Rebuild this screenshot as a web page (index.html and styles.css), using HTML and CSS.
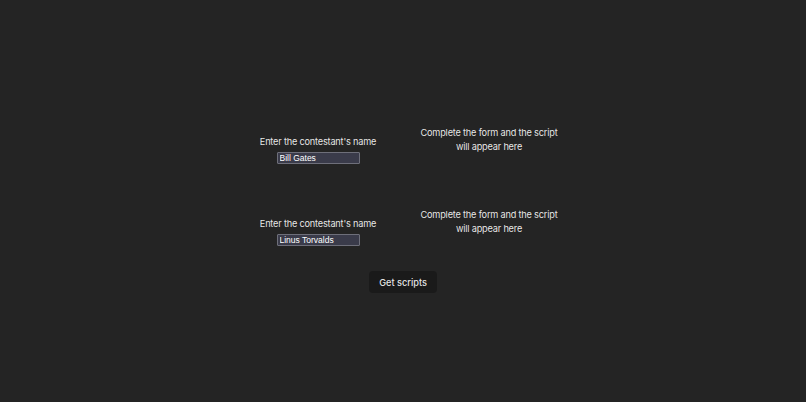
FILE: index.html
```html
<!DOCTYPE html>
<html lang="en">
<head>
<meta charset="utf-8">
<title>Contestants</title>
<link rel="stylesheet" href="styles.css">
</head>
<body>
<main class="app">
  <div class="form-list">
    <div class="row">
      <div class="entry">
        <label class="entry-label" for="c1">Enter the contestant's name</label>
        <input class="entry-input" id="c1" type="text" value="Bill Gates">
      </div>
      <p class="script">Complete the form and the script<br>will appear here</p>
    </div>
    <div class="row">
      <div class="entry">
        <label class="entry-label" for="c2">Enter the contestant's name</label>
        <input class="entry-input" id="c2" type="text" value="Linus Torvalds">
      </div>
      <p class="script">Complete the form and the script<br>will appear here</p>
    </div>
  </div>
  <button class="submit" type="button">Get scripts</button>
</main>
</body>
</html>
```
FILE: styles.css
```css
html, body {
  margin: 0;
  padding: 0;
  background: #242424;
  color: rgba(255, 255, 255, 0.9);
  font-family: Inter, "Noto Sans", sans-serif;
  font-size: 9.2px;
  letter-spacing: -0.2px;
  line-height: 14px;
}
.app {
  padding-top: 126px;
  display: flex;
  flex-direction: column;
  align-items: center;
}
.form-list {
  display: flex;
  flex-direction: column;
  gap: 44px;
}
.row {
  display: flex;
  gap: 20px;
  align-items: flex-start;
}
.entry {
  width: 152px;
  padding-top: 9px;
  display: flex;
  flex-direction: column;
  align-items: center;
}
.entry-label {
  display: block;
  white-space: nowrap;
}
.entry-input {
  margin-top: 3px;
  box-sizing: border-box;
  width: 83px;
  height: 12px;
  padding: 0 2px;
  background: #3a3b4a;
  border: 1px solid #6e6f7a;
  border-radius: 1px;
  color: #ffffff;
  font-family: "Liberation Sans", Arial, sans-serif;
  font-size: 8.5px;
  letter-spacing: 0;
  outline: none;
}
.script {
  width: 150px;
  margin: 0;
  text-align: center;
  white-space: nowrap;
}
.submit {
  margin-top: 25px;
  box-sizing: border-box;
  width: 68px;
  height: 22px;
  padding: 0;
  background: #1a1a1a;
  border: 1px solid transparent;
  border-radius: 4px;
  color: rgba(255, 255, 255, 0.9);
  font-family: Inter, "Noto Sans", sans-serif;
  font-size: 9.2px;
  letter-spacing: 0;
  font-weight: 500;
  cursor: pointer;
}
```
